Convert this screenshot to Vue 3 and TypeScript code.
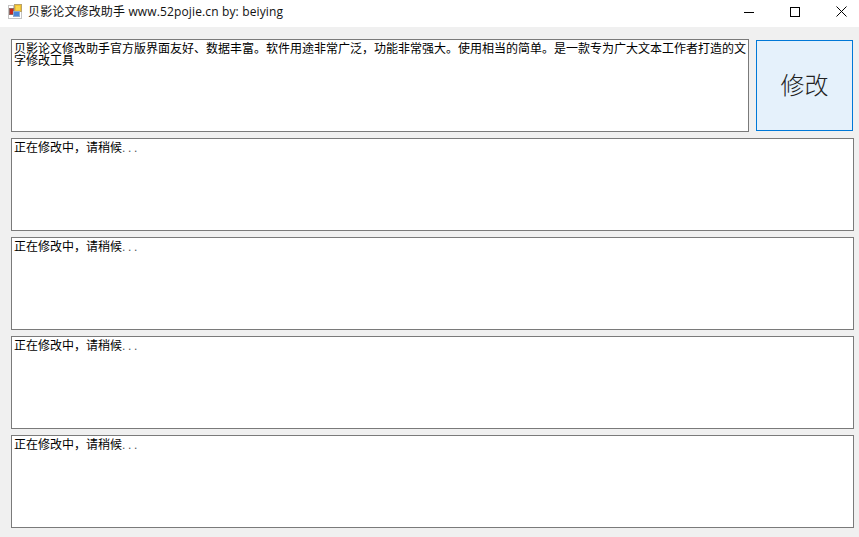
<script setup lang="ts">
const comma = '\uFF0C'
const top = `贝影论文修改助手官方版界面友好、数据丰富。软件用途非常广泛${comma}功能非常强大。使用相当的简单。是一款专为广大文本工作者打造的文字修改工具`
const rows: string[] = Array(4).fill(`正在修改中${comma}请稍候`)
</script>

<template>
  <div class="window">
    <header class="titlebar">
      <svg class="appicon" width="16" height="16" viewBox="0 0 16 16">
        <rect x="0.5" y="1.5" width="13" height="13" fill="#fff" stroke="#c4c4c4" />
        <path d="M0.5 5.5H6M5.5 1.5V5" stroke="#c4c4c4" fill="none" />
        <rect x="6.5" y="0.5" width="7" height="7" fill="#f2c230" stroke="#b9a26a" />
        <rect x="8" y="2" width="4" height="4" fill="#f8d64e" />
        <rect x="1.5" y="4.5" width="4" height="6" fill="#c8281e" stroke="#8f6a66" />
        <rect x="5.5" y="7.5" width="6" height="5" fill="#4a86d8" stroke="#8fa9cc" />
      </svg>
      <span class="title">贝影论文修改助手 www.52pojie.cn by: beiying</span>
      <div class="controls">
        <span class="ctl">
          <svg width="10" height="10" viewBox="0 0 10 10"><path d="M0 5.5H10" stroke="#000" fill="none" /></svg>
        </span>
        <span class="ctl">
          <svg width="10" height="10" viewBox="0 0 10 10"><rect x="0.5" y="0.5" width="9" height="9" stroke="#000" fill="none" /></svg>
        </span>
        <span class="ctl">
          <svg width="11" height="11" viewBox="0 0 11 11"><path d="M0.5 0.5L10.5 10.5M10.5 0.5L0.5 10.5" stroke="#000" fill="none" stroke-width="1" /></svg>
        </span>
      </div>
    </header>
    <main class="content">
      <div class="toprow">
        <div class="box topbox">{{ top }}</div>
        <button class="action" type="button">修改</button>
      </div>
      <div v-for="(r, i) in rows" :key="i" class="box">{{ r }}<span class="dots">...</span></div>
    </main>
  </div>
</template>

<style>
html, body { margin: 0; background: #f0f0f0; }
</style>

<style scoped>
.window {
  width: 859px;
  height: 537px;
  overflow: hidden;
  background: #f0f0f0;
  font-family: "Noto Sans CJK SC", "Liberation Sans", sans-serif;
  color: #000;
}
.titlebar {
  height: 27px;
  background: #fff;
  display: flex;
  align-items: center;
  padding-left: 8px;
  box-sizing: border-box;
}
.appicon { flex: none; margin-right: 4px; margin-bottom: 3px; }
.title {
  font-family: "Open Sans", "Noto Sans CJK SC", sans-serif;
  font-size: 12px;
  line-height: 24px;
  margin-bottom: 3px;
  color: #111;
  letter-spacing: 0.14px;
}
.controls { margin-left: auto; margin-right: -5px; display: flex; align-self: flex-start; }
.ctl {
  width: 46px;
  height: 23px;
  display: flex;
  align-items: center;
  justify-content: center;
}
.content {
  padding: 12px 5px 0 11px;
  display: flex;
  flex-direction: column;
  gap: 6px;
}
.toprow { display: flex; align-items: center; gap: 7px; margin-right: 1px; }
.box {
  box-sizing: border-box;
  height: 93px;
  background: #fff;
  border: 1px solid #7a7a7a;
  padding: 2px 2px 0;
  font-size: 12px;
  line-height: 12px;
  overflow: hidden;
}
.dots {
  font-family: "Liberation Sans", sans-serif;
  letter-spacing: 2.7px;
  color: #555;
}
.topbox { width: 738px; flex: none; }
.action {
  width: 97px;
  height: 91px;
  flex: none;
  background: #e5f1fb;
  border: 1px solid #0078d7;
  padding: 0 0 4px;
  font-family: "Noto Sans CJK SC", sans-serif;
  font-size: 24px;
  font-weight: 300;
  color: #222;
}
</style>
